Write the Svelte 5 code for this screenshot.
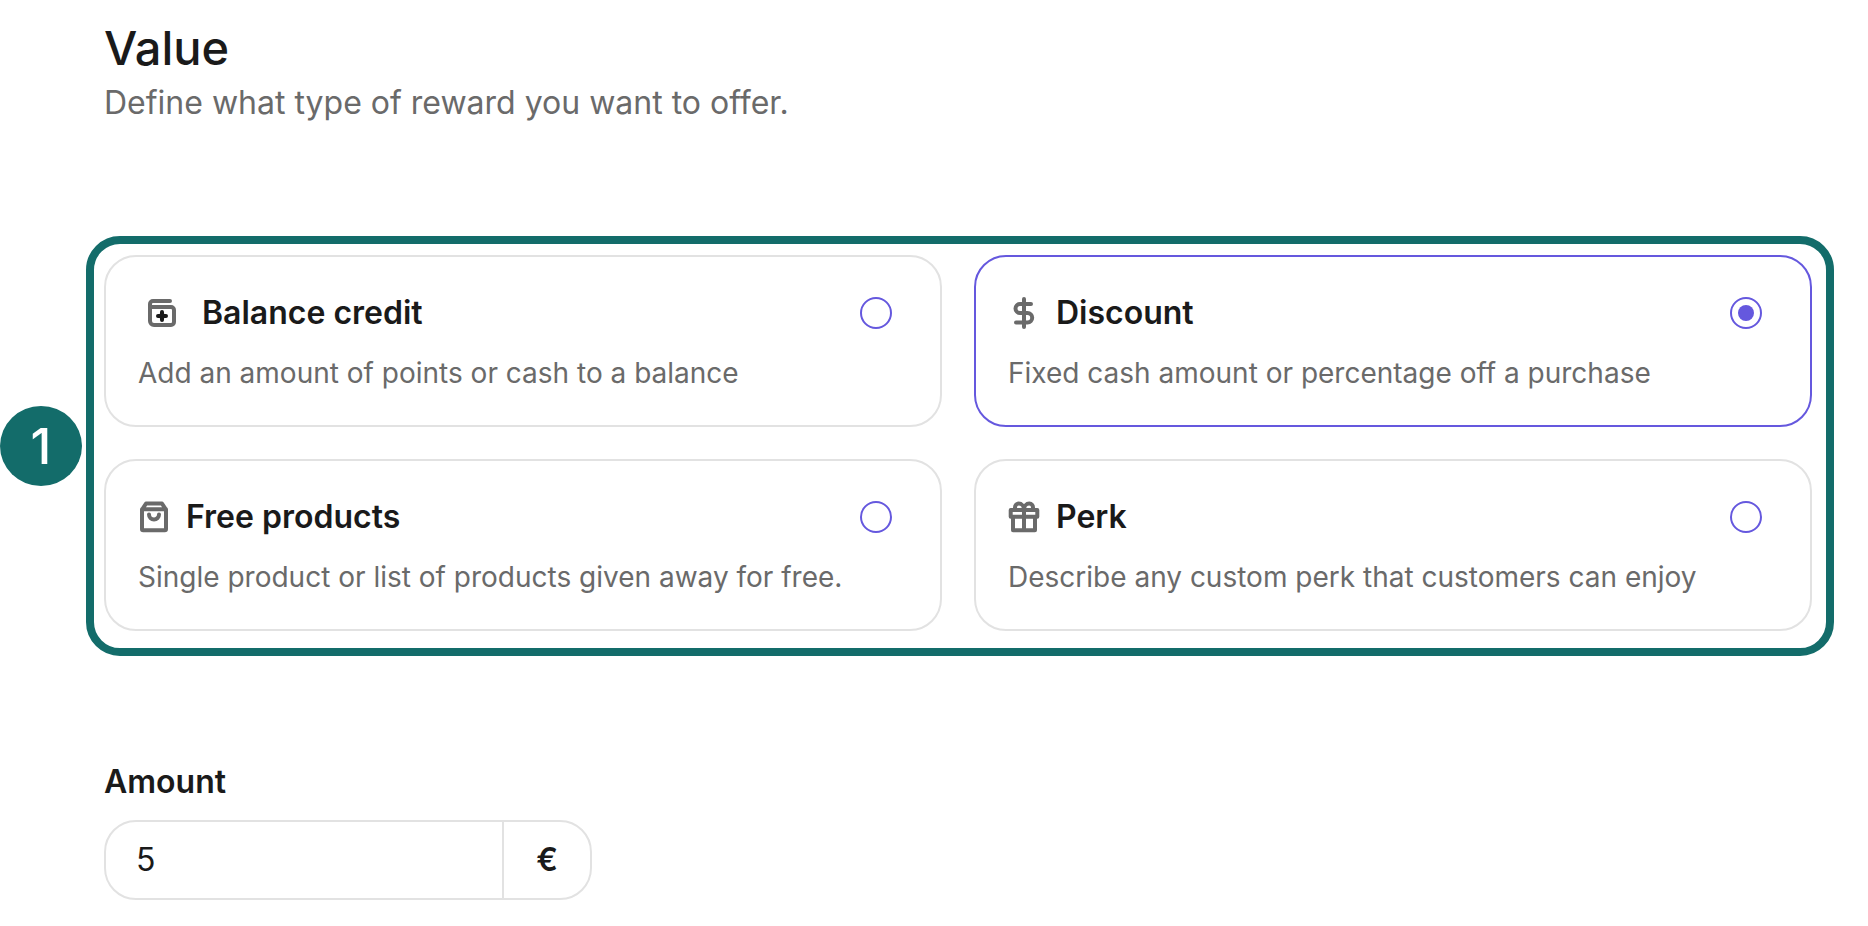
<script>
  const options = [
    { id: 'balance', title: 'Balance credit', text: 'Add an amount of points or cash to a balance' },
    { id: 'discount', title: 'Discount', text: 'Fixed cash amount or percentage off a purchase' },
    { id: 'products', title: 'Free products', text: 'Single product or list of products given away for free.' },
    { id: 'perk', title: 'Perk', text: 'Describe any custom perk that customers can enjoy' }
  ];

  let selected = $state('discount');
  let amount = $state('5');
</script>

<main>
  <header>
    <h1>Value</h1>
    <p>Define what type of reward you want to offer.</p>
  </header>

  <section class="step">
    <span class="badge">1</span>
    <div class="frame" role="radiogroup" aria-label="Value">
      {#each options as option (option.id)}
        <label class="card" class:selected={selected === option.id}>
          <span class="heading">
            {#if option.id === 'balance'}
              <svg width="48" height="48" viewBox="0 0 48 48" aria-hidden="true">
                <path d="M32 12H15a3 3 0 0 0-3 3v17a4 4 0 0 0 4 4h17a3 3 0 0 0 3-3V21a3 3 0 0 0-3-3H12" />
                <path class="dark" d="M24 23v8M20 27h8" />
                <circle class="dot" cx="24" cy="27" r="3" />
              </svg>
            {:else if option.id === 'discount'}
              <svg width="32" height="32" viewBox="0 0 32 32" aria-hidden="true">
                <path d="M16 2v28M23 7H12a4.500 4.500 0 0 0 0 9h7.500a4.700 4.700 0 0 1 0 9.400H8" />
              </svg>
            {:else if option.id === 'products'}
              <svg width="32" height="32" viewBox="0 0 32 32" aria-hidden="true">
                <path d="M4 8.500 8 2.600h16l4 5.900V28a1.200 1.200 0 0 1-1.200 1.200H5.200A1.200 1.200 0 0 1 4 28ZM4 8.300h24M11 13.500a5 5 0 0 0 10 0" />
              </svg>
            {:else}
              <svg width="32" height="32" viewBox="0 0 32 32" aria-hidden="true">
                <path d="M2.700 9h26.600v6.800H2.700ZM5 15.800h22v13.500H5ZM16 9v20M16 9c0-4-2.500-6.400-5.300-6.400C8.300 2.600 7 4.500 7 6.500V9M16 9c0-4 2.500-6.400 5.300-6.400C23.700 2.600 25 4.500 25 6.500V9" />
              </svg>
            {/if}
            <span class="title">{option.title}</span>
            <input type="radio" name="reward" value={option.id} bind:group={selected} />
          </span>
          <span class="text">{option.text}</span>
        </label>
      {/each}
    </div>
  </section>

  <section class="amount">
    <label for="amount">Amount</label>
    <div class="field">
      <input id="amount" type="text" inputmode="decimal" bind:value={amount} />
      <span class="unit">€</span>
    </div>
  </section>
</main>

<style>
  :global(body) {
    margin: 0;
    background: #fff;
  }

  main {
    box-sizing: border-box;
    padding: 18px 34px 26px 0;
    font-family: Inter, "Liberation Sans", sans-serif;
    font-size: 32px;
    color: #1a1a1a;
  }

  header,
  .amount {
    padding-left: 104px;
  }

  h1 {
    margin: 0;
    font-size: 47px;
    font-weight: 500;
    line-height: 60px;
  }

  p {
    margin: 0;
    line-height: 50px;
    color: #6a6a6a;
  }

  .step {
    display: flex;
    align-items: center;
    gap: 4px;
    margin-top: 108px;
  }

  .badge {
    flex: none;
    width: 82px;
    border-radius: 50%;
    background: #136c6a;
    color: #fff;
    font-size: 50px;
    font-weight: 500;
    line-height: 80px;
    text-align: center;
  }

  .frame {
    flex: 1;
    display: grid;
    grid-template-columns: 1fr 1fr;
    gap: 32px;
    padding: 11px 14px 17px 10px;
    border: 8px solid #136c6a;
    border-radius: 34px;
  }

  .card {
    display: flex;
    flex-direction: column;
    gap: 16px;
    padding: 32px;
    border: 2px solid #e2e2e2;
    border-radius: 32px;
    cursor: pointer;
  }

  .card.selected {
    border-color: #6558de;
  }

  .heading {
    display: flex;
    align-items: center;
    gap: 16px;
    padding-right: 16px;
    line-height: 48px;
  }

  svg {
    flex: none;
    fill: none;
    stroke: #6a6a6a;
    stroke-width: 4;
    stroke-linecap: round;
    stroke-linejoin: round;
    overflow: visible;
  }

  .dark {
    stroke: #1a1a1a;
  }

  .dot {
    fill: #1a1a1a;
    stroke: none;
  }

  .title {
    flex: 1;
    font-weight: 600;
  }

  .text {
    font-size: 28px;
    line-height: 40px;
    color: #6a6a6a;
  }

  input[type="radio"] {
    appearance: none;
    box-sizing: border-box;
    flex: none;
    width: 32px;
    height: 32px;
    margin: 0;
    border: 2px solid #6558de;
    border-radius: 50%;
  }

  input[type="radio"]:checked {
    padding: 6px;
    background: #6558de content-box;
  }

  .amount {
    display: flex;
    flex-direction: column;
    align-items: flex-start;
    gap: 14px;
    margin-top: 102px;
  }

  .amount label {
    font-weight: 600;
    line-height: 48px;
  }

  .field {
    display: flex;
    box-sizing: border-box;
    width: 488px;
    max-width: 100%;
    border: 2px solid #e2e2e2;
    border-radius: 32px;
    overflow: hidden;
    line-height: 48px;
  }

  .field input {
    flex: 1;
    min-width: 0;
    padding: 14px 30px;
    border: 0;
    outline: 0;
    background: none;
    color: inherit;
    font: inherit;
  }

  .unit {
    width: 86px;
    padding: 14px 0;
    border-left: 2px solid #e2e2e2;
    font-weight: 600;
    text-align: center;
  }
</style>
